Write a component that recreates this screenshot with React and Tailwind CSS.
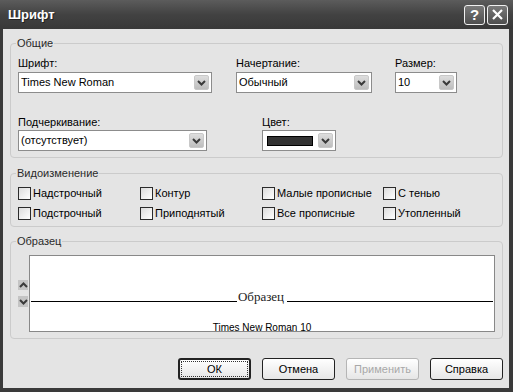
import React from 'react';

const Arrow = ({ up }) => (
  <svg width="9" height="6" viewBox="0 0 9 6">
    <path
      d={up ? 'M1 5 L4.5 1.5 L8 5' : 'M1 1 L4.5 4.5 L8 1'}
      fill="none"
      stroke="#3a3a3a"
      strokeWidth="2"
    />
  </svg>
);

const DropButton = () => (
  <div className="w-[15px] h-[15px] shrink-0 flex items-center justify-center rounded-[2px] bg-linear-to-b from-[#dedede] to-[#bdbdbd] border border-[#c8c8c8]">
    <Arrow />
  </div>
);

const Combo = ({ value, width, children }) => (
  <div
    className={`${width} h-[21px] flex items-center bg-white border border-[#8c8c8c] p-[2px]`}
  >
    <div className="flex-1 flex items-center">
      {children || <span className="leading-[13px]">{value}</span>}
    </div>
    <DropButton />
  </div>
);

const Check = ({ label, width }) => (
  <label className={`${width} flex items-center gap-[2px] h-[13px]`}>
    <span className="w-[13px] h-[13px] shrink-0 border border-[#2b2b2b] bg-linear-to-br from-[#dcdcdc] to-white" />
    <span className="leading-[13px]">{label}</span>
  </label>
);

const Button = ({ children, primary, disabled }) => (
  <button
    className={`w-[73px] h-[22px] rounded-[3px] flex items-center justify-center bg-linear-to-b from-white to-[#e6e6e6] ${
      disabled
        ? 'border border-[#b5b5b5] text-[#a8a8a8]'
        : primary
          ? 'border-2 border-[#222]'
          : 'border border-[#222]'
    }`}
  >
    {primary ? (
      <span className="w-[67px] h-[16px] flex items-center justify-center border border-dotted border-[#333]">
        {children}
      </span>
    ) : (
      children
    )}
  </button>
);

const App = () => {
  return (
    <div
      className="w-[513px] h-[392px] flex flex-col bg-[#3a3a3a] text-[11px] text-black"
      style={{ fontFamily: '"Liberation Sans", Arial, sans-serif' }}
    >
      {/* title bar */}
      <div className="h-[29px] shrink-0 flex items-center justify-between pl-[8px] pr-[5px] bg-linear-to-b from-[#5c5c5c] via-[#424242] to-[#383838]">
        <span className="text-white font-bold text-[13px] [text-shadow:1px_1px_0_#222]">
          Шрифт
        </span>
        <div className="flex gap-[2px]">
          <div className="w-[21px] h-[20px] rounded-[3px] border border-[#f0f0f0] bg-linear-to-b from-[#7a7a7a] to-[#4e4e4e] flex items-center justify-center text-white font-bold text-[15px] leading-none">
            ?
          </div>
          <div className="w-[21px] h-[20px] rounded-[3px] border border-[#f0f0f0] bg-linear-to-b from-[#7a7a7a] to-[#4e4e4e] flex items-center justify-center">
            <svg width="11" height="11" viewBox="0 0 11 11">
              <path d="M1 1 L10 10 M10 1 L1 10" stroke="white" strokeWidth="2.2" />
            </svg>
          </div>
        </div>
      </div>

      {/* body */}
      <div className="flex-1 flex flex-col bg-[#e4e4e4] ml-[3px] mr-[4px] mb-[4px] pl-[7px] pr-[6px] pt-[8px]">
        {/* Общие */}
        <fieldset className="border border-[#cbcbcb] rounded-[4px] px-[7px] pb-[6px]">
          <legend className="-ml-[2px] px-[1px] leading-[13px] text-[#2a2a2a]">Общие</legend>
          <div className="pt-[7px]">
            <div className="flex">
              <div className="w-[194px] mr-[24px] flex flex-col">
                <span className="leading-[13px] mb-[2px]">Шрифт:</span>
                <Combo value="Times New Roman" width="w-[194px]" />
              </div>
              <div className="w-[136px] mr-[23px] flex flex-col">
                <span className="leading-[13px] mb-[2px]">Начертание:</span>
                <Combo value="Обычный" width="w-[136px]" />
              </div>
              <div className="w-[62px] flex flex-col">
                <span className="leading-[13px] mb-[2px]">Размер:</span>
                <Combo value="10" width="w-[62px]" />
              </div>
            </div>
            <div className="flex mt-[23px]">
              <div className="w-[189px] mr-[55px] flex flex-col">
                <span className="leading-[13px] mb-[1px]">Подчеркивание:</span>
                <Combo value="(отсутствует)" width="w-[189px]" />
              </div>
              <div className="w-[74px] flex flex-col">
                <span className="leading-[13px] mb-[1px]">Цвет:</span>
                <Combo width="w-[74px]">
                  <span className="ml-[2px] w-[46px] h-[10px] bg-[#333] border border-black" />
                </Combo>
              </div>
            </div>
          </div>
        </fieldset>

        {/* Видоизменение */}
        <fieldset className="mt-[9px] border border-[#cbcbcb] rounded-[4px] px-[7px] pb-[6px]">
          <legend className="-ml-[2px] px-[1px] leading-[13px] text-[#2a2a2a]">Видоизменение</legend>
          <div className="pt-[7px] flex flex-col gap-[7px]">
            <div className="flex">
              <Check label="Надстрочный" width="w-[122px]" />
              <Check label="Контур" width="w-[122px]" />
              <Check label="Малые прописные" width="w-[121px]" />
              <Check label="С тенью" />
            </div>
            <div className="flex">
              <Check label="Подстрочный" width="w-[122px]" />
              <Check label="Приподнятый" width="w-[122px]" />
              <Check label="Все прописные" width="w-[121px]" />
              <Check label="Утопленный" />
            </div>
          </div>
        </fieldset>

        {/* Образец */}
        <fieldset className="mt-[8px] border border-[#cbcbcb] rounded-[4px] px-[7px] pb-[6px]">
          <legend className="-ml-[2px] px-[1px] leading-[13px] text-[#2a2a2a]">Образец</legend>
          <div className="pt-[7px] flex">
            <div className="w-[11px] flex flex-col items-start justify-center gap-[6px]">
              <div className="w-[10px] h-[10px] bg-[#c4c4c4] flex items-center justify-center">
                <Arrow up />
              </div>
              <div className="w-[10px] h-[11px] bg-[#c4c4c4] flex items-center justify-center">
                <Arrow />
              </div>
            </div>
            <div className="flex-1 h-[77px] bg-white border border-[#888] flex flex-col px-[1px]">
              <div className="mt-[34px] h-[13px] flex items-end">
                <div className="flex-1 h-px bg-black mb-[1px]" />
                <span
                  className="text-[13px] leading-[13px] px-[1px] mr-[2px] text-[#222]"
                  style={{ fontFamily: '"Liberation Serif", "Times New Roman", serif' }}
                >
                  Образец
                </span>
                <div className="flex-1 h-px bg-black mb-[1px]" />
              </div>
              <div className="mt-[19px] text-[10px] leading-[12px] text-center">
                Times New Roman 10
              </div>
            </div>
          </div>
        </fieldset>

        {/* buttons */}
        <div className="mt-[19px] flex justify-end gap-[11px]">
          <Button primary>ОК</Button>
          <Button>Отмена</Button>
          <Button disabled>Применить</Button>
          <Button>Справка</Button>
        </div>
      </div>
    </div>
  );
};

export default App;
